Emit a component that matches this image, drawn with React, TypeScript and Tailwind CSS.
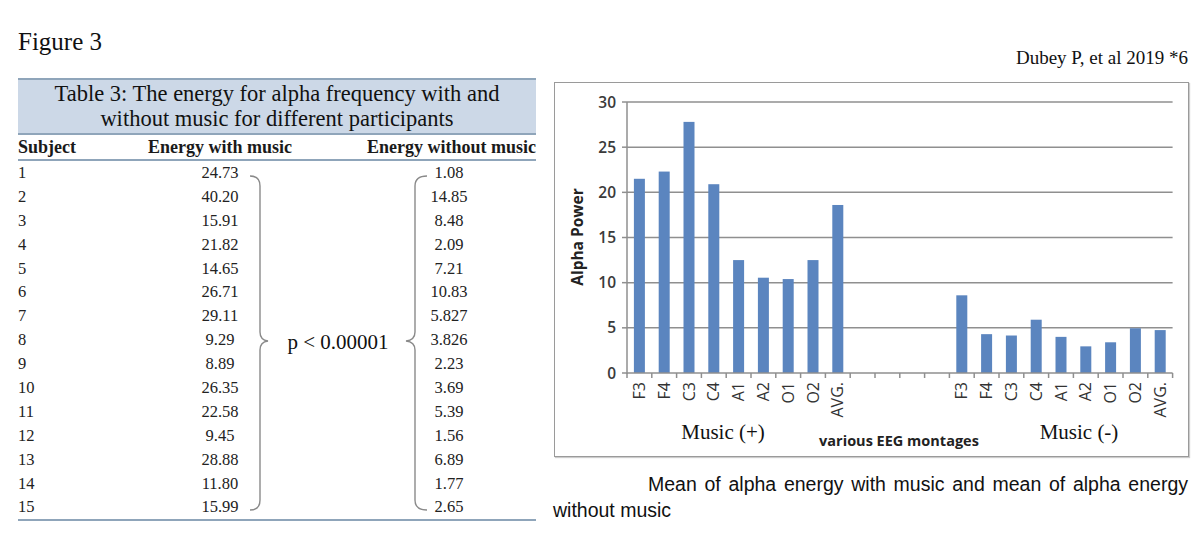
import React from "react";

const withMusic = ["24.73","40.20","15.91","21.82","14.65","26.71","29.11","9.29","8.89","26.35","22.58","9.45","28.88","11.80","15.99"];
const withoutMusic = ["1.08","14.85","8.48","2.09","7.21","10.83","5.827","3.826","2.23","3.69","5.39","1.56","6.89","1.77","2.65"];

const labels = ["F3","F4","C3","C4","A1","A2","O1","O2","AVG."];
const plus = [21.5, 22.3, 27.8, 20.9, 12.5, 10.55, 10.4, 12.5, 18.6];
const minus = [8.6, 4.3, 4.15, 5.9, 4.0, 2.95, 3.4, 4.95, 4.75];

const X0 = 72;
const BASE = 290;
const UNIT = 9.033;
const CW = 24.8;
const y = (v: number) => BASE - v * UNIT;

function Chart() {
  const bars: { i: number; v: number; l: string }[] = [];
  plus.forEach((v, k) => bars.push({ i: k, v, l: labels[k] }));
  minus.forEach((v, k) => bars.push({ i: 13 + k, v, l: labels[k] }));
  const right = X0 + 22 * CW;
  return (
    <svg width="633" height="373" viewBox="0 0 633 373" className="block">
      {[5, 10, 15, 20, 25, 30].map((v) => (
        <line key={v} x1={X0} x2={right} y1={y(v)} y2={y(v)} stroke="#8f8f8f" strokeWidth="1.5" />
      ))}
      {[0, 5, 10, 15, 20, 25, 30].map((v) => (
        <g key={"t" + v}>
          <line x1={X0 - 5} x2={X0} y1={y(v)} y2={y(v)} stroke="#8f8f8f" strokeWidth="1.5" />
          <text x={61} y={y(v) + 5.5} textAnchor="end" fontFamily="'Open Sans', sans-serif" fontSize="15.5" fontWeight="600" fill="#3a3a3a">{v}</text>
        </g>
      ))}
      {bars.map((b) => {
        const cx = X0 + CW * (b.i + 0.5);
        return (
          <rect key={b.i} x={cx - 5.5} y={y(b.v)} width="11" height={b.v * UNIT} fill="#5b85bf" />
        );
      })}
      <line x1={X0} x2={X0} y1={y(30)} y2={BASE + 1} stroke="#8f8f8f" strokeWidth="1.5" />
      <line x1={X0} x2={right} y1={BASE} y2={BASE} stroke="#8f8f8f" strokeWidth="1.5" />
      {Array.from({ length: 23 }).map((_, k) => (
        <line key={"x" + k} x1={X0 + CW * k} x2={X0 + CW * k} y1={BASE} y2={BASE + 5} stroke="#8f8f8f" strokeWidth="1.5" />
      ))}
      {bars.map((b) => {
        const cx = X0 + CW * (b.i + 0.5);
        return (
          <text
            key={"l" + b.i}
            transform={`translate(${cx + 5.5}, 299) rotate(-90)`}
            textAnchor="end"
            fontFamily="'Open Sans', sans-serif"
            fontSize="16"
            fill="#333"
          >
            {b.l}
          </text>
        );
      })}
      <text
        transform="translate(28, 154) rotate(-90)"
        textAnchor="middle"
        fontFamily="'Open Sans', sans-serif"
        fontSize="15.5"
        fontWeight="700"
        fill="#222"
      >
        Alpha Power
      </text>
      <text x={168} y={356} textAnchor="middle" fontFamily="'Liberation Serif', serif" fontSize="21" fill="#111">Music (+)</text>
      <text x={344} y={363} textAnchor="middle" fontFamily="'Open Sans', sans-serif" fontSize="14.5" fontWeight="700" fill="#222">various EEG montages</text>
      <text x={524} y={356} textAnchor="middle" fontFamily="'Liberation Serif', serif" fontSize="21" fill="#111">Music (-)</text>
    </svg>
  );
}

function Braces() {
  return (
    <svg width="518" height="359" viewBox="0 0 518 359" className="pointer-events-none absolute left-0 top-0">
      <path
        d="M232 15 Q242 15 242 25 L242 171 Q242 179 250 180 Q242 181 242 189 L242 339 Q242 349 232 349"
        fill="none"
        stroke="#8a8a8a"
        strokeWidth="1.4"
      />
      <path
        d="M409 15 Q397 15 397 25 L397 171 Q397 179 388 180 Q397 181 397 189 L397 339 Q397 349 409 349"
        fill="none"
        stroke="#8a8a8a"
        strokeWidth="1.4"
      />
      <text x={320} y={188} textAnchor="middle" fontFamily="'Liberation Serif', serif" fontSize="21" fill="#111">
        p &lt; 0.00001
      </text>
    </svg>
  );
}

export default function App() {
  return (
    <div className="flex h-[557px] w-[1200px] overflow-hidden bg-white text-[#1a1a1a]">
      <div className="w-[553px] shrink-0 pl-[18px]">
        <div className="mt-[27px] text-[25px] leading-[30px] text-[#111]" style={{ fontFamily: "'Liberation Serif', serif" }}>
          Figure 3
        </div>
        <div className="mt-[21px] w-[518px]" style={{ fontFamily: "'Liberation Serif', serif" }}>
          <div className="border-y-2 border-[#8fa5ba] bg-[#ccd8e7] pt-[1px] pb-[2px] text-center text-[22.5px] leading-[25px] text-[#111]">
            Table 3: The energy for alpha frequency with and
            <br />
            without music for different participants
          </div>
          <div className="grid h-[26px] grid-cols-[130px_144px_70px_174px] items-center border-b-2 border-[#8fa5ba] text-[18px] font-bold leading-[24px] text-[#1a1a1a]">
            <div className="whitespace-nowrap">Subject</div>
            <div className="flex justify-center whitespace-nowrap">Energy with music</div>
            <div />
            <div className="flex justify-end whitespace-nowrap">Energy without music</div>
          </div>
          <div className="relative border-b-2 border-[#8fa5ba] text-[16.5px] text-[#222]">
            {withMusic.map((w, i) => (
              <div key={i} className="grid h-[23.9px] grid-cols-[130px_144px_70px_174px] items-center leading-[23.9px]">
                <div>{i + 1}</div>
                <div className="text-center">{w}</div>
                <div />
                <div className="text-center">{withoutMusic[i]}</div>
              </div>
            ))}
            <Braces />
          </div>
        </div>
      </div>
      <div className="w-[637px] shrink-0">
        <div className="mt-[46px] pr-[2px] text-right text-[19px] leading-[24px] text-[#111]" style={{ fontFamily: "'Liberation Serif', serif" }}>
          Dubey P, et al 2019 *6
        </div>
        <div className="ml-[1px] mt-[12px] h-[375px] w-[635px] border border-[#9a9a9a] shadow-[1px_1px_1px_rgba(0,0,0,0.2)]">
          <Chart />
        </div>
        <p className="mt-[14px] w-[635px] indent-[95px] text-justify text-[19.5px] leading-[26px] text-[#111]" style={{ fontFamily: "'Liberation Sans', Arial, sans-serif" }}>
          Mean of alpha energy with music and mean of alpha energy without music
        </p>
      </div>
    </div>
  );
}
